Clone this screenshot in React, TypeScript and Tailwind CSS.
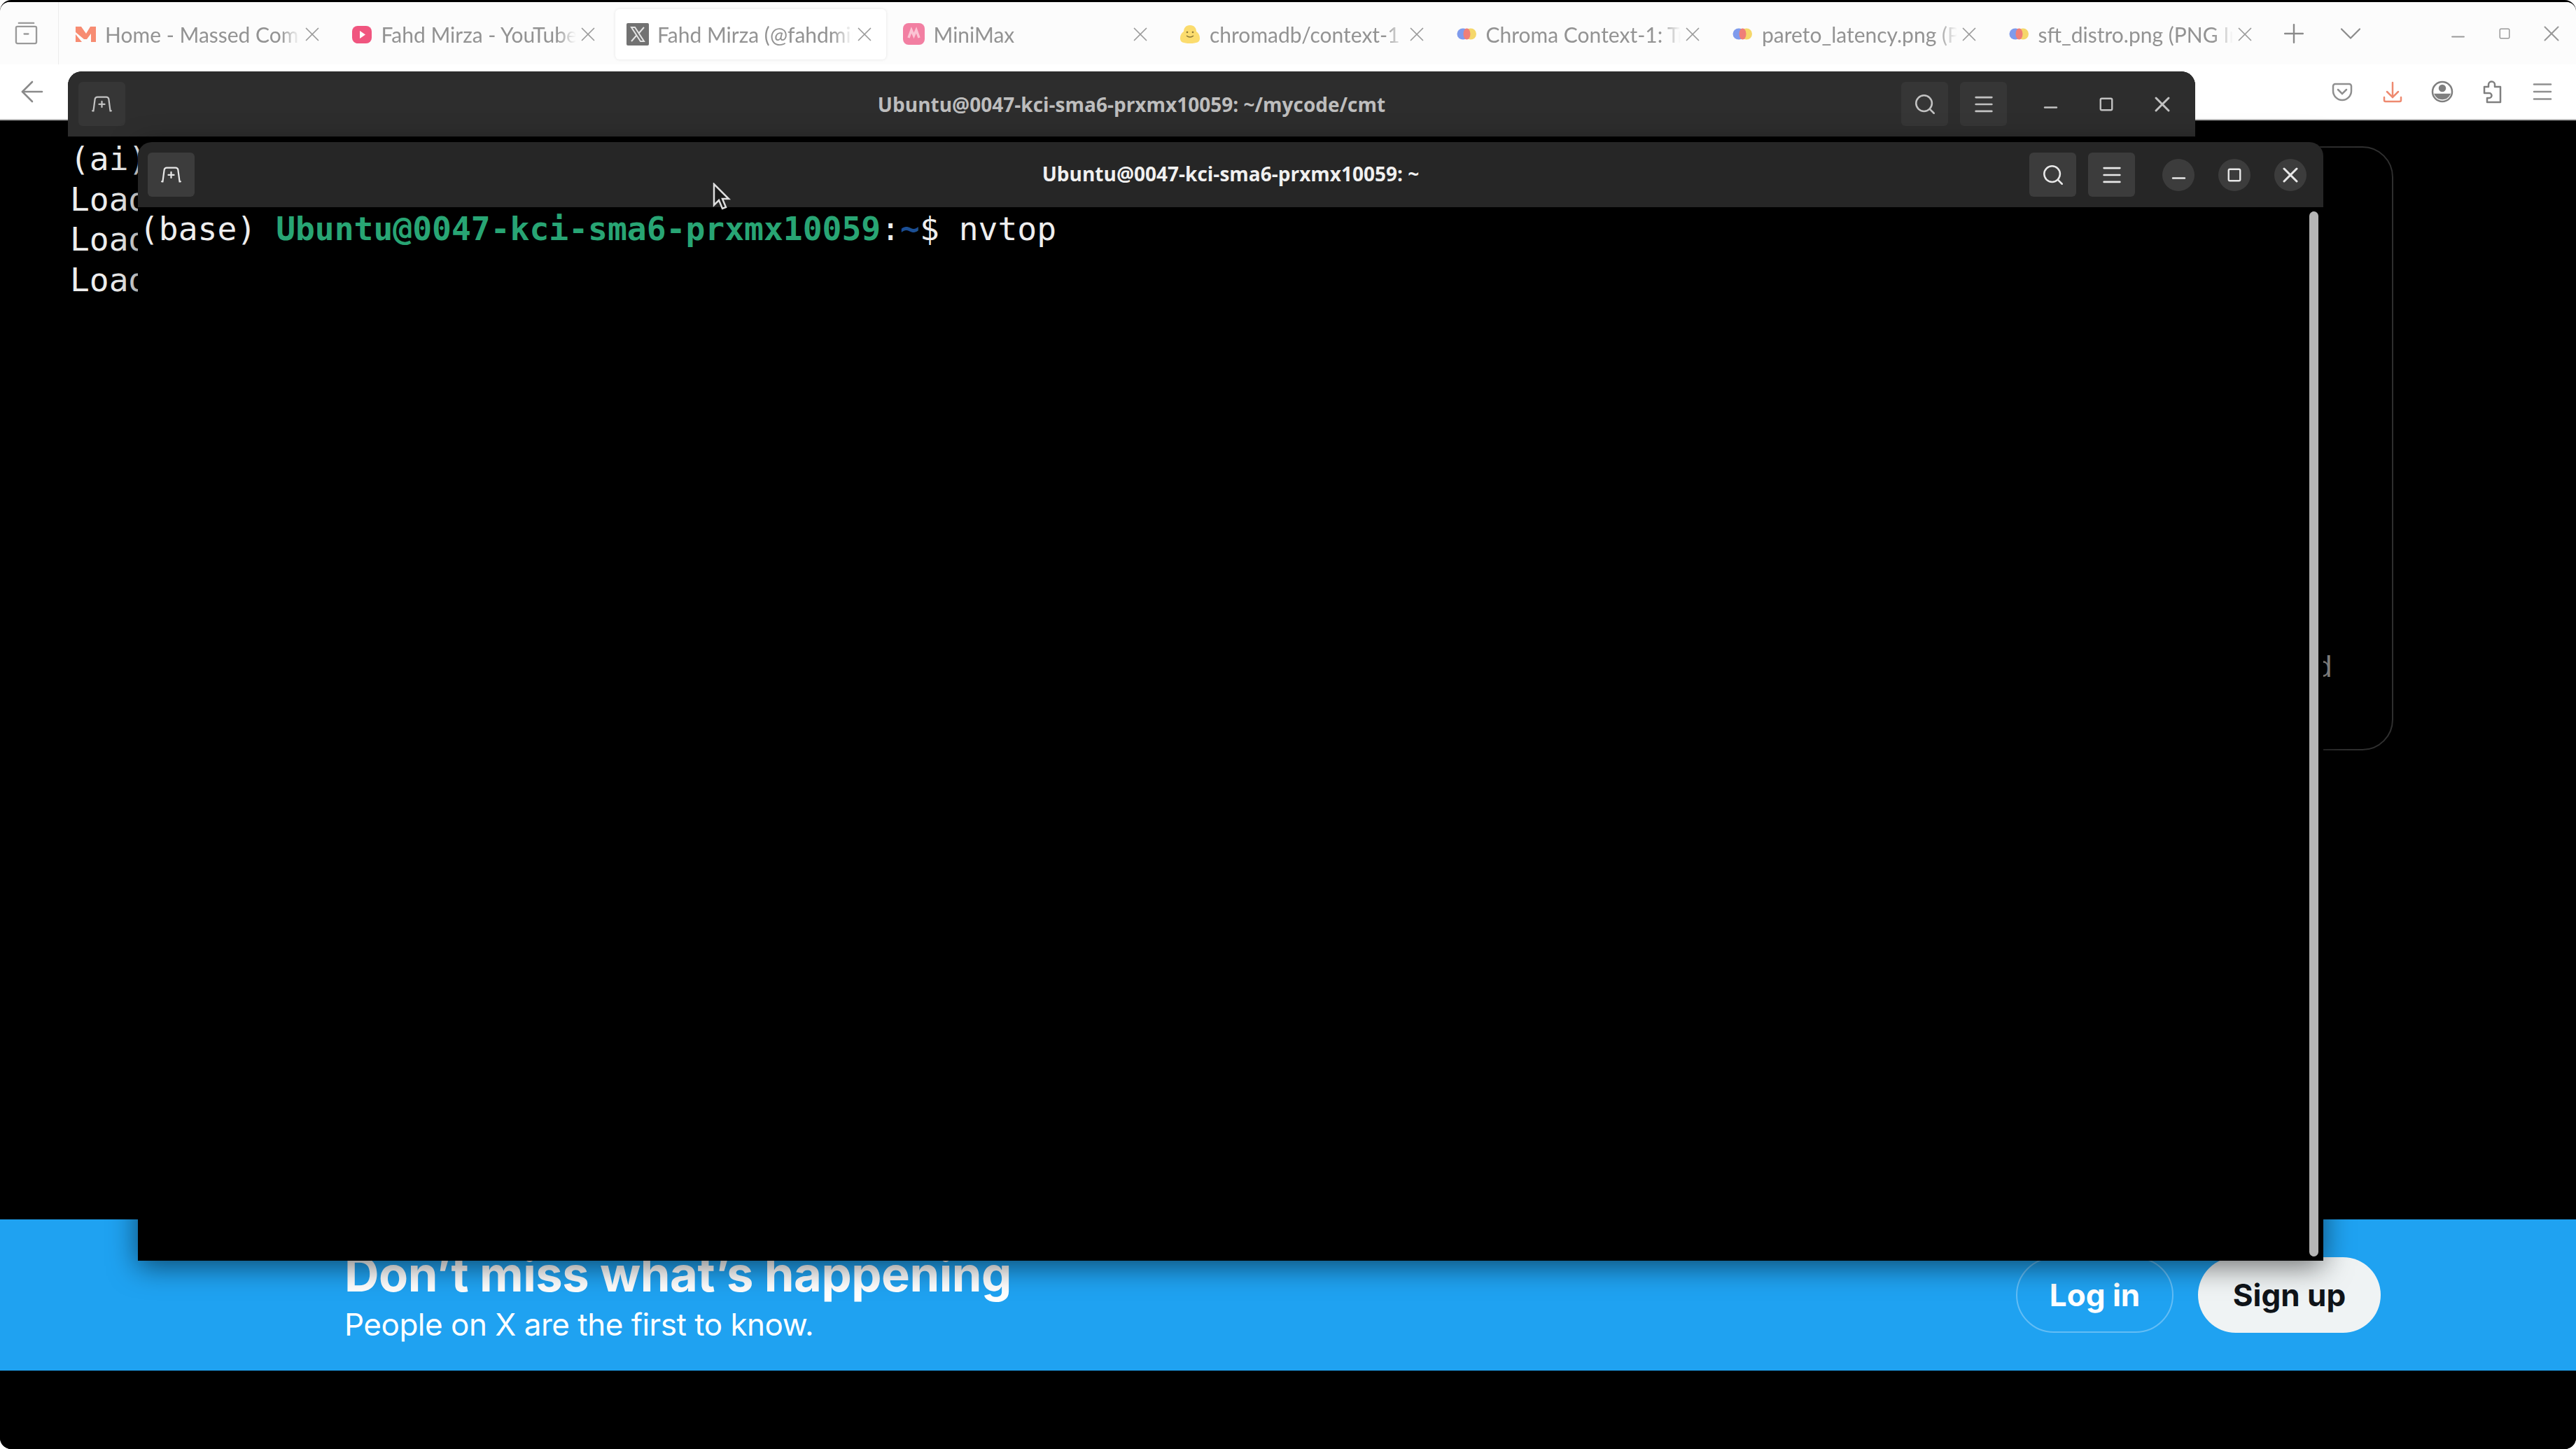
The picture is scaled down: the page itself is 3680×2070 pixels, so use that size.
import React from 'react';
import { ArrowLeft, ChevronDown, Menu, Minus, Plus, Search, Square, X } from 'lucide-react';

const tabs = [
  { title: 'Home - Massed Compute', icon: 'massed' },
  { title: 'Fahd Mirza - YouTube', icon: 'youtube' },
  { title: 'Fahd Mirza (@fahdmirzac) / X', icon: 'x', active: true },
  { title: 'MiniMax', icon: 'minimax' },
  { title: 'chromadb/context-1 · Hugging Face', icon: 'hf' },
  { title: 'Chroma Context-1: Training', icon: 'chroma' },
  { title: 'pareto_latency.png (PNG Image)', icon: 'chroma' },
  { title: 'sft_distro.png (PNG Image)', icon: 'chroma' },
];

function Favicon({ kind }: { kind: string }) {
  if (kind === 'massed') {
    return (
      <svg width="31" height="24" viewBox="0 0 31 24" fill="#f78c72">
        <path d="M1 1h8l7 10 6-10h8v22h-7V11l-6 8h-4L1 9z" />
        <path d="M1 12l9 11H1z" />
      </svg>
    );
  }
  if (kind === 'youtube') {
    return (
      <svg width="30" height="30" viewBox="0 0 30 30">
        <rect x="1" y="3" width="28" height="25" rx="8" fill="#f0557f" />
        <path d="M12 10l8 5.500-8 5.500z" fill="#fff" />
      </svg>
    );
  }
  if (kind === 'x') {
    return (
      <svg width="32" height="32" viewBox="0 0 32 32">
        <rect width="32" height="32" rx="2" fill="#727272" />
        <path d="M7 6h5l13 20h-5zM25 6l-7 8M14 18l-7 8" stroke="#e4e4e4" strokeWidth="2" fill="none" />
      </svg>
    );
  }
  if (kind === 'minimax') {
    return (
      <svg width="31" height="31" viewBox="0 0 31 31">
        <rect width="31" height="31" rx="8" fill="#f27fa2" />
        <path d="M8 21l4-11 3.500 8 3.500-8 4 11" stroke="#fbc4d4" strokeWidth="3.500" fill="none" />
      </svg>
    );
  }
  if (kind === 'hf') {
    return (
      <svg width="28" height="26" viewBox="0 0 28 26">
        <path d="M14 0c6 0 9 4 9 9 3 2 5 5 5 10 0 5-4 7-14 7S0 24 0 19c0-5 2-8 5-10 0-5 3-9 9-9z" fill="#fbdc6e" />
        <circle cx="10" cy="10" r="1.300" fill="#8a7636" />
        <circle cx="18" cy="10" r="1.300" fill="#8a7636" />
        <path d="M9 15q5 4 10 0" stroke="#8a7636" strokeWidth="1.500" fill="none" />
      </svg>
    );
  }
  return (
    <svg width="28" height="17" viewBox="0 0 28 17">
      <ellipse cx="9" cy="8.500" rx="8.500" ry="8" fill="#7f9bec" />
      <ellipse cx="20" cy="8.500" rx="8" ry="8" fill="#f5d76a" />
      <ellipse cx="14.500" cy="8.500" rx="5" ry="8" fill="#ef7f78" />
    </svg>
  );
}

function Tab({ title, icon, active }: { title: string; icon: string; active?: boolean }) {
  return (
    <div className="w-[394.5px] h-[72px] pr-[8px] shrink-0">
      <div
        className={
          active
            ? 'h-full flex items-center pl-[16px] pr-[14px] rounded-[6px] bg-white shadow-[0_0_4px_rgba(0,0,0,0.1)]'
            : 'h-full flex items-center pl-[16px] pr-[14px]'
        }
      >
        <div className="w-[32px] h-[32px] flex items-center justify-center shrink-0">
          <Favicon kind={icon} />
        </div>
        <div className="ml-[12px] flex-1 min-w-0 overflow-hidden whitespace-nowrap font-['Lato',sans-serif] text-[30px] leading-[38px] text-[#939393] [mask-image:linear-gradient(to_right,black_90%,transparent)]">
          {title}
        </div>
        <X className="w-[34px] h-[34px] text-[#9a9a9a] shrink-0" strokeWidth={1.2} />
      </div>
    </div>
  );
}

function NewTabIcon({ color }: { color: string }) {
  return (
    <svg width="31" height="25" viewBox="0 0 34 28" fill="none" stroke={color} strokeWidth="2.500" strokeLinecap="round">
      <path d="M2 25h1.500L6 6a4 4 0 0 1 4-3h14a4 4 0 0 1 4 3l2.500 19H32" />
      <path d="M17 10v9M12.500 14.500h9" />
    </svg>
  );
}

function TerminalBar({ title, focused }: { title: string; focused?: boolean }) {
  const iconColor = focused ? '#e8e8e8' : '#c2c2c2';
  const btn = focused ? 'bg-[#3c3c3c]' : 'bg-[#363636]';
  const circle = focused
    ? 'w-[46px] h-[46px] rounded-full bg-[#3c3c3c] flex items-center justify-center'
    : 'w-[46px] h-[46px] rounded-full flex items-center justify-center';
  return (
    <div
      className={
        focused
          ? 'h-[93px] shrink-0 bg-[#262626] rounded-t-[20px] flex items-center pl-[14px] pr-[24px] relative'
          : 'h-[93px] shrink-0 bg-[#2d2d2d] rounded-t-[20px] flex items-center pl-[15px] pr-[24px] relative'
      }
    >
      <div className={`w-[67px] h-[63px] rounded-[6px] flex items-center justify-center ${btn}`}>
        <NewTabIcon color={iconColor} />
      </div>
      <div
        className={
          focused
            ? 'absolute inset-x-0 text-center text-[28px] font-bold text-[#f0f0f0] whitespace-nowrap -translate-y-[2px]'
            : 'absolute inset-x-0 text-center text-[28px] font-bold text-[#bdbdbd] whitespace-nowrap'
        }
      >
        {title}
      </div>
      <div className="flex items-center gap-[17px] ml-auto">
        <div className={`w-[67px] h-[63px] rounded-[6px] flex items-center justify-center ${btn}`}>
          <Search className="w-[34px] h-[34px]" color={iconColor} strokeWidth={1.8} />
        </div>
        <div className={`w-[67px] h-[63px] rounded-[6px] flex items-center justify-center ${btn}`}>
          <Menu className="w-[34px] h-[34px]" color={iconColor} strokeWidth={1.9} />
        </div>
      </div>
      <div className="flex items-center gap-[34px] ml-[39px]">
        <div className={circle}>
          <Minus className="w-[29px] h-[29px] shrink-0 translate-y-[5px]" color={iconColor} strokeWidth={2} />
        </div>
        <div className={circle}>
          <Square className="w-[22px] h-[22px] shrink-0" color={iconColor} strokeWidth={2.6} />
        </div>
        <div className={circle}>
          <X className="w-[36px] h-[36px] shrink-0" color={iconColor} strokeWidth={2} />
        </div>
      </div>
    </div>
  );
}

const mono = "font-['DejaVu_Sans_Mono',monospace] text-[46.3px] leading-[57.5px] text-[#eeeeee]";

export default function App() {
  return (
    <div className="w-[3680px] h-[2070px] bg-white font-['Open_Sans',sans-serif]">
      <div className="relative w-full h-full bg-black rounded-[16px] overflow-hidden pt-[3px] flex flex-col">
        {/* browser chrome */}
        <div className="h-[169px] shrink-0 bg-white flex flex-col rounded-t-[14px]">
          <div className="h-[89px] flex items-center bg-[#fcfcfc] rounded-t-[14px]">
            <div className="w-[84px] h-full border-r border-[#ececec] flex items-center pl-[21px] shrink-0">
              <svg width="33" height="33" viewBox="0 0 34 34" fill="none" stroke="#9a9a9a" strokeWidth="2.400" strokeLinecap="round">
                <path d="M6 2h22M2 9a2 2 0 0 1 2-2h26a2 2 0 0 1 2 2v21a2 2 0 0 1-2 2H4a2 2 0 0 1-2-2z" />
                <path d="M14 18h6" />
              </svg>
            </div>
            <div className="flex items-center pl-[6px] pt-[2px]">
              {tabs.map((t) => (
                <Tab key={t.title} title={t.title} icon={t.icon} active={t.active} />
              ))}
            </div>
            <Plus className="w-[44px] h-[44px] ml-[9px] text-[#8a8a8a] shrink-0" strokeWidth={1.3} />
            <ChevronDown className="w-[52px] h-[52px] ml-[33px] text-[#8a8a8a] shrink-0" strokeWidth={1} />
            <div className="flex items-center gap-[31px] ml-auto pr-[17px]">
              <div className="w-[36px] flex justify-center">
                <Minus className="w-[29px] h-[29px] shrink-0 translate-y-[5px] text-[#999999]" strokeWidth={1.6} />
              </div>
              <div className="w-[36px] flex justify-center">
                <Square className="w-[18px] h-[18px] shrink-0 text-[#999999]" strokeWidth={2} />
              </div>
              <div className="w-[36px] flex justify-center">
                <X className="w-[38px] h-[38px] shrink-0 text-[#999999]" strokeWidth={1.3} />
              </div>
            </div>
          </div>
          <div className="flex-1 flex items-center justify-between pl-[22px] pr-[12px] border-b-2 border-[#bdbdbd]">
            <ArrowLeft className="w-[48px] h-[48px] text-[#8a8a8a]" strokeWidth={1.3} />
            <div className="flex items-center">
              <div className="w-[71.500px] flex justify-center">
                <svg width="30" height="27" viewBox="0 0 30 27" fill="none" stroke="#8f8f8f" strokeWidth="2.500" strokeLinecap="round">
                  <path d="M5 2h20a3 3 0 0 1 3 3v7c0 7-6 13-13 13S2 19 2 12V5a3 3 0 0 1 3-3z" />
                  <path d="M9 10l6 6 6-6" />
                </svg>
              </div>
              <div className="w-[71.500px] flex justify-center">
                <svg width="28" height="31" viewBox="0 0 28 31" fill="none" stroke="#ee8a70" strokeWidth="2.500" strokeLinecap="round">
                  <path d="M14 2v20M6 15l8 8 8-8M2 23v4a2 2 0 0 0 2 2h20a2 2 0 0 0 2-2v-4" />
                </svg>
              </div>
              <div className="w-[71.500px] flex justify-center">
                <svg width="32" height="32" viewBox="0 0 32 32" fill="none" stroke="#7f7f7f" strokeWidth="2.500">
                  <circle cx="16" cy="16" r="14" />
                  <circle cx="16" cy="11" r="4" fill="#7f7f7f" />
                  <path d="M6 20h20c-2 4-6 6-10 6s-8-2-10-6z" fill="#7f7f7f" />
                </svg>
              </div>
              <div className="w-[71.500px] flex justify-center">
                <svg width="29" height="34" viewBox="0 0 29 34" fill="none" stroke="#7f7f7f" strokeWidth="2.500" strokeLinejoin="round">
                  <path d="M3 10h6V7a4.500 4.500 0 0 1 9 0v3h8v22H7v-6h3a3.500 3.500 0 0 0 0-7H3z" />
                </svg>
              </div>
              <div className="w-[71.500px] flex justify-center">
                <Menu className="w-[36px] h-[36px] shrink-0 text-[#8f8f8f]" strokeWidth={1.7} />
              </div>
            </div>
          </div>
        </div>

        {/* page behind the terminals */}
        <div className="relative flex-1">
          <div className="absolute left-[2800px] top-[37px] w-[619px] h-[863px] border-2 border-[#2f2f2f] rounded-[44px]" />
          <div className="absolute left-[3308px] top-[755px] text-[42px] leading-[52px] text-[#9a9a9a] font-['Liberation_Sans',sans-serif]">
            d
          </div>
        </div>

        {/* X sign up banner */}
        <div className="h-[216px] shrink-0 bg-[#1fa2f1] flex items-center justify-between pl-[492px] pr-[279px] text-white font-['Inter',sans-serif]">
          <div className="flex flex-col">
            <div className="text-[68.700px] leading-[82px] font-bold tracking-[-0.5px] -mt-[2px]">Don’t miss what’s happening</div>
            <div className="text-[44px] leading-[56px] mt-[3px] tracking-[-0.5px]">People on X are the first to know.</div>
          </div>
          <div className="flex items-center gap-[35px]">
            <div className="w-[225px] h-[108px] rounded-full border-2 border-[#63bdf5] flex items-center justify-center text-[44px] font-bold">
              Log in
            </div>
            <div className="w-[261px] h-[108px] rounded-full bg-[#eff3f4] flex items-center justify-center text-[44px] font-bold text-[#0f1419]">
              Sign up
            </div>
          </div>
        </div>
        <div className="h-[112px] shrink-0 bg-black" />

        {/* back terminal window */}
        <div className="absolute left-[97px] top-[102px] w-[3039px] h-[1635px] flex flex-col bg-black rounded-t-[20px]">
          <TerminalBar title="Ubuntu@0047-kci-sma6-prxmx10059: ~/mycode/cmt" />
          <div className={`${mono} pl-[3px] pt-[4px]`}>
            <div>(ai) Ubuntu</div>
            <div>Loading</div>
            <div>Loading</div>
            <div>Loading</div>
          </div>
        </div>

        {/* front terminal window */}
        <div className="absolute left-[197px] top-[203px] w-[3122px] h-[1598px] flex flex-col bg-black shadow-[0_8px_40px_rgba(0,0,0,0.55)] rounded-t-[20px]">
          <TerminalBar title="Ubuntu@0047-kci-sma6-prxmx10059: ~" focused />
          <div className="flex-1 flex pl-[2px] pr-[7px] pt-[3px] pb-[6px]">
            <div className={`flex-1 ${mono} whitespace-pre`}>
              (base) <span className="font-bold text-[#28a574]">Ubuntu@0047-kci-sma6-prxmx10059</span>:
              <span className="font-bold text-[#1c4f94]">~</span>$ nvtop
            </div>
            <div className="w-[13px] rounded-full bg-[#b5b5b5] mt-[3px]" />
          </div>
        </div>

        {/* mouse pointer */}
        <svg className="absolute left-[1018px] top-[261px]" width="26" height="40" viewBox="0 0 26 40">
          <path d="M2 2v30l7-7 5 12 5-2-5-12h9z" fill="#1a1a1a" stroke="#dddddd" strokeWidth="2.500" />
        </svg>
      </div>
    </div>
  );
}
